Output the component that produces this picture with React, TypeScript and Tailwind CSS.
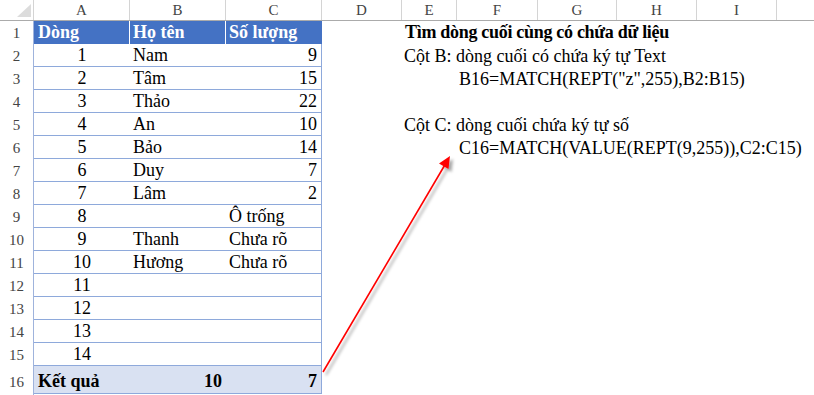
import React from "react";

type Row = {
  n: number;
  a?: string;
  b?: string;
  c?: string;
  cLeft?: boolean;
  right?: string;
  rightCls?: string;
};

const rows: Row[] = [
  { n: 2, a: "1", b: "Nam", c: "9", right: "Cột B: dòng cuối có chứa ký tự Text", rightCls: "pl-[82px]" },
  { n: 3, a: "2", b: "Tâm", c: "15", right: 'B16=MATCH(REPT("z",255),B2:B15)', rightCls: "pl-[137px]" },
  { n: 4, a: "3", b: "Thảo", c: "22" },
  { n: 5, a: "4", b: "An", c: "10", right: "Cột C: dòng cuối chứa ký tự số", rightCls: "pl-[82px]" },
  { n: 6, a: "5", b: "Bảo", c: "14", right: "C16=MATCH(VALUE(REPT(9,255)),C2:C15)", rightCls: "pl-[137px]" },
  { n: 7, a: "6", b: "Duy", c: "7" },
  { n: 8, a: "7", b: "Lâm", c: "2" },
  { n: 9, a: "8", b: "", c: "Ô trống", cLeft: true },
  { n: 10, a: "9", b: "Thanh", c: "Chưa rõ", cLeft: true },
  { n: 11, a: "10", b: "Hương", c: "Chưa rõ", cLeft: true },
  { n: 12, a: "11" },
  { n: 13, a: "12" },
  { n: 14, a: "13" },
  { n: 15, a: "14" },
];

const colLetters: { l: string; w: string }[] = [
  { l: "A", w: "w-[96px]" },
  { l: "B", w: "w-[96px]" },
  { l: "C", w: "w-[96px]" },
  { l: "D", w: "w-[80px]" },
  { l: "E", w: "w-[55px]" },
  { l: "F", w: "w-[81px]" },
  { l: "G", w: "w-[79px]" },
  { l: "H", w: "w-[80px]" },
  { l: "I", w: "w-[80px]" },
  { l: "", w: "w-[60px]" },
];

export default function App() {
  return (
    <div className="relative w-[814px] h-[395px] overflow-hidden bg-white text-black font-['Liberation_Serif','Times_New_Roman',serif]">
      {/* column header */}
      <div className="flex h-[21px] border-b border-[#ababab] bg-white">
        <div className="relative w-[34px] shrink-0 border-r border-[#d4d4d4]">
          <svg className="absolute left-0 top-0" width="33" height="20">
            <polygon points="31,4 31,17 17,17" fill="#dcdcdc" />
          </svg>
        </div>
        {colLetters.map((c, i) => (
          <div
            key={i}
            className={`${c.w} shrink-0 border-r border-[#d4d4d4] flex items-end justify-center pb-[2px] text-[15px] leading-[16px] text-[#444]`}
          >
            {c.l}
          </div>
        ))}
      </div>

      {/* row 1 - table header */}
      <div className="flex h-[23px]">
        <div className="w-[34px] shrink-0 border-r border-[#9fb3dc] flex items-end justify-center pb-[3px] text-[15px] leading-[16px] text-[#444]">
          1
        </div>
        <div className="w-[96px] shrink-0 bg-[#4472c4] border-r border-white flex items-end pl-[4px] pb-[3px] text-[18px] leading-[18px] font-bold text-white">
          Dòng
        </div>
        <div className="w-[96px] shrink-0 bg-[#4472c4] border-r border-white flex items-end pl-[3px] pb-[3px] text-[18px] leading-[18px] font-bold text-white">
          Họ tên
        </div>
        <div className="w-[96px] shrink-0 bg-[#4472c4] flex items-end pl-[3px] pb-[3px] text-[18px] leading-[18px] font-bold text-white">
          Số lượng
        </div>
        <div className="flex-1 flex items-end pl-[83px] pb-[3px] text-[18px] leading-[18px] tracking-[-0.3px] font-bold whitespace-nowrap">
          Tìm dòng cuối cùng có chứa dữ liệu
        </div>
      </div>

      {rows.map((r) => (
        <div key={r.n} className="flex h-[23px]">
          <div className="w-[34px] shrink-0 border-r border-[#9fb3dc] flex items-end justify-center pb-[3px] text-[15px] leading-[16px] text-[#444]">
            {r.n}
          </div>
          <div className="flex w-[288px] shrink-0 border-b border-r border-[#8ea9db]">
            <div className="w-[96px] shrink-0 flex items-end justify-center pb-[2px] text-[18px] leading-[18px]">
              {r.a}
            </div>
            <div className="w-[96px] shrink-0 flex items-end pl-[3px] pb-[2px] text-[18px] leading-[18px] whitespace-nowrap">
              {r.b}
            </div>
            <div
              className={`w-[95px] shrink-0 flex items-end pb-[2px] text-[18px] leading-[18px] whitespace-nowrap ${
                r.cLeft ? "justify-start pl-[3px]" : "justify-end pr-[4px]"
              }`}
            >
              {r.c}
            </div>
          </div>
          <div
            className={`flex-1 flex items-end pb-[2px] text-[18px] leading-[18px] whitespace-nowrap ${r.rightCls ?? ""}`}
          >
            {r.right}
          </div>
        </div>
      ))}

      {/* row 16 - total */}
      <div className="flex h-[28px]">
        <div className="w-[34px] shrink-0 border-r border-[#9fb3dc] flex items-end justify-center pb-[4px] text-[15px] leading-[16px] text-[#444]">
          16
        </div>
        <div className="flex w-[288px] shrink-0 bg-[#d9e1f2] border-b border-r border-[#8ea9db] font-bold">
          <div className="w-[96px] shrink-0 flex items-end pl-[4px] pb-[3px] text-[18px] leading-[18px] whitespace-nowrap">
            Kết quả
          </div>
          <div className="w-[96px] shrink-0 flex items-end justify-end pr-[4px] pb-[3px] text-[18px] leading-[18px]">
            10
          </div>
          <div className="w-[95px] shrink-0 flex items-end justify-end pr-[4px] pb-[3px] text-[18px] leading-[18px]">
            7
          </div>
        </div>
        <div className="flex-1" />
      </div>
      <div className="flex h-[10px]">
        <div className="w-[34px] shrink-0 border-r border-[#9fb3dc]" />
      </div>

      {/* arrow */}
      <svg className="absolute left-0 top-0 pointer-events-none" width="814" height="395">
        <defs>
          <filter id="sh" x="-20%" y="-20%" width="140%" height="140%">
            <feGaussianBlur in="SourceAlpha" stdDeviation="1.6" />
            <feOffset dx="3" dy="3" result="b" />
            <feFlood floodColor="#000" floodOpacity="0.35" />
            <feComposite in2="b" operator="in" />
            <feMerge>
              <feMergeNode />
              <feMergeNode in="SourceGraphic" />
            </feMerge>
          </filter>
        </defs>
        <g filter="url(#sh)">
          <line x1="323" y1="372" x2="446" y2="163" stroke="#ff0000" strokeWidth="1.6" />
          <polygon points="450,156 448.5,169 439,163.5" fill="#ff0000" />
        </g>
      </svg>
    </div>
  );
}
